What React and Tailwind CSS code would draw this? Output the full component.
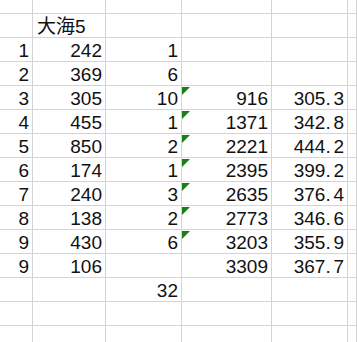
const COLS = ['w-[33px]', 'w-[73px]', 'w-[76px]', 'w-[90px]', 'w-[76px]', 'flex-1']

const ROWS = [
  { a: '1', b: '242', c: '1' },
  { a: '2', b: '369', c: '6' },
  { a: '3', b: '305', c: '10', d: '916', e: '305.3', flag: true },
  { a: '4', b: '455', c: '1', d: '1371', e: '342.8', flag: true },
  { a: '5', b: '850', c: '2', d: '2221', e: '444.2', flag: true },
  { a: '6', b: '174', c: '1', d: '2395', e: '399.2', flag: true },
  { a: '7', b: '240', c: '3', d: '2635', e: '376.4', flag: true },
  { a: '8', b: '138', c: '2', d: '2773', e: '346.6', flag: true },
  { a: '9', b: '430', c: '6', d: '3203', e: '355.9', flag: true },
  { a: '9', b: '106', d: '3309', e: '367.7' },
  { c: '32' },
  {},
]

function Flag() {
  return (
    <svg className="absolute left-0 top-[1px]" width="8" height="8" viewBox="0 0 8 8">
      <polygon points="0,0 8,0 0,8" fill="#1b7d1b" />
    </svg>
  )
}

// half-width period in the sheet font sits in a full digit cell
function Num({ value }) {
  if (!value || !value.includes('.')) return value
  const [int, dec] = value.split('.')
  return (
    <>
      {int}
      <span className="inline-block w-[8px]">.</span>
      {dec}
    </>
  )
}

function Cell({ col, children, left, flag, h = 'h-[24px]' }) {
  return (
    <div
      className={`relative ${COLS[col]} ${h} shrink-0 border-r border-b border-[#d4d4d4] flex items-end ${
        left ? 'justify-start pl-[4px]' : 'justify-end pr-[3px]'
      }`}
    >
      {flag && <Flag />}
      <span className="leading-[20px] whitespace-nowrap">
        <Num value={children} />
      </span>
    </div>
  )
}

function Row({ cells = [], flag, left, h }) {
  return (
    <div className="flex">
      {COLS.map((_, i) => (
        <Cell key={i} col={i} h={h} left={left && i === 1} flag={flag && i === 3}>
          {cells[i]}
        </Cell>
      ))}
    </div>
  )
}

export default function App() {
  return (
    <div className="w-[357px] h-[342px] overflow-hidden bg-white text-[#111] text-[19px] font-['Liberation_Sans','Noto_Sans_CJK_JP',sans-serif]">
      <Row h="h-[14px]" />
      <Row cells={['', '大海5']} left />
      {ROWS.map((r, i) => (
        <Row key={i} cells={[r.a, r.b, r.c, r.d, r.e]} flag={r.flag} />
      ))}
      <Row />
    </div>
  )
}
